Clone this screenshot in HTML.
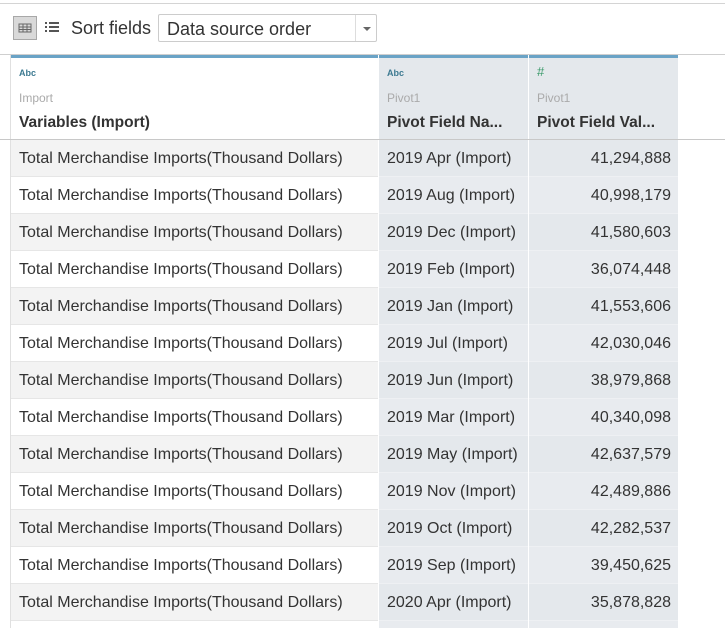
<!DOCTYPE html><html><head><style>
html,body{margin:0;width:725px;height:628px;overflow:hidden}
body{background:#fff;font-family:"Liberation Sans",sans-serif;position:relative}
.top{position:absolute;left:0;top:3px;width:725px;height:1px;background:#d4d4d4}
.tb{position:absolute;left:0;top:54px;width:725px;height:1px;background:#cfcfcf}
.gi{position:absolute;left:13px;top:16px;width:24px;height:24px;background:#d9d9d9;border:1px solid #a8a8a8;box-sizing:border-box}
.sf{position:absolute;left:71px;top:18px;font-size:18px;color:#333}
.sel{position:absolute;left:158px;top:14px;width:219px;height:28px;border:1px solid #ccc;border-radius:2px;box-sizing:border-box;font-size:18px;color:#333;padding:4px 8px}
.sel:after{content:"";position:absolute;left:196px;top:0;width:1px;height:26px;background:#ddd}
.ar{position:absolute;left:363px;top:27px;border:4px solid transparent;border-top:4px solid #666;border-bottom:0}
.wrap{position:absolute;left:0;top:0;width:725px;height:628px;overflow:hidden}
.col{position:absolute;top:55px;height:573px}
.c1{left:11px;width:367px}
.c2{left:379px;width:149px;background:#e4e8ec}
.c3{left:529px;width:149px;background:#e4e8ec}
.bar{position:absolute;left:0;top:0;right:0;height:3px;background:#6aa3c6}
.abc{position:absolute;left:8px;top:13px;font-size:9px;font-weight:bold;color:#3d7a91}
.src{position:absolute;left:8px;top:36px;font-size:12px;color:#aaa}
.nm{position:absolute;left:8px;top:59px;font-size:15.5px;font-weight:bold;color:#333}
.hb{position:absolute;left:0;top:139px;width:725px;height:1px;background:#c8c8c8}
.vl{position:absolute;left:10px;top:55px;width:1px;height:573px;background:#e0e0e0}
.r{position:absolute;height:37px;line-height:38px;font-size:16px;color:#333;box-sizing:border-box;border-bottom:1px solid #e6e6e6;white-space:nowrap}
</style></head><body><div class="wrap">
<div class="top"></div>
<div class="gi"><svg width="22" height="22" style="position:absolute;left:0;top:0"><rect x="5" y="7" width="12" height="8" fill="none" stroke="#666" stroke-width="1"/><path d="M5 10h12M5 12.5h12M9 7v8M13 7v8" stroke="#666" stroke-width="1"/></svg></div>
<svg width="16" height="14" style="position:absolute;left:45px;top:22px"><path d="M0 1h2M4 1h10M0 5h2M4 5h10M0 9h2M4 9h10" stroke="#555" stroke-width="2"/></svg>
<div class="sf">Sort fields</div>
<div class="sel">Data source order</div><div class="ar"></div>
<div class="tb"></div>
<div class="col c1"><div class="bar"></div><div class="abc">Abc</div><div class="src">Import</div><div class="nm">Variables (Import)</div></div>
<div class="col c2"><div class="bar"></div><div class="abc">Abc</div><div class="src">Pivot1</div><div class="nm">Pivot Field Na...</div></div>
<div class="col c3"><div class="bar"></div><div class="abc" style="color:#3a9a6a;font-size:13px;top:9px;font-weight:normal">#</div><div class="src">Pivot1</div><div class="nm">Pivot Field Val...</div></div>
<div class="vl"></div>
<div class="hb"></div>
<div id="rows"></div>
</div>
<script>
var d=[["2019 Apr (Import)","41,294,888"],["2019 Aug (Import)","40,998,179"],["2019 Dec (Import)","41,580,603"],["2019 Feb (Import)","36,074,448"],["2019 Jan (Import)","41,553,606"],["2019 Jul (Import)","42,030,046"],["2019 Jun (Import)","38,979,868"],["2019 Mar (Import)","40,340,098"],["2019 May (Import)","42,637,579"],["2019 Nov (Import)","42,489,886"],["2019 Oct (Import)","42,282,537"],["2019 Sep (Import)","39,450,625"],["2020 Apr (Import)","35,878,828"],["",""]];
var h="";d.forEach(function(r,i){var y=140+i*37,g=i%2==0;
h+='<div class="r" style="left:11px;width:367px;top:'+y+'px;padding-left:8px;background:'+(g?'#f3f3f3':'#fff')+'">'+(r[0]?'Total Merchandise Imports(Thousand Dollars)':'')+'</div>';
h+='<div class="r" style="left:379px;width:149px;top:'+y+'px;padding-left:8px;border-color:#eef0f3;background:'+(g?'#e4e8ec':'#e8ebef')+'">'+r[0]+'</div>';
h+='<div class="r" style="left:529px;width:149px;top:'+y+'px;padding-right:7px;text-align:right;border-color:#eef0f3;background:'+(g?'#e4e8ec':'#e8ebef')+'">'+r[1]+'</div>';});
document.getElementById("rows").innerHTML=h;
</script>
</body></html>
